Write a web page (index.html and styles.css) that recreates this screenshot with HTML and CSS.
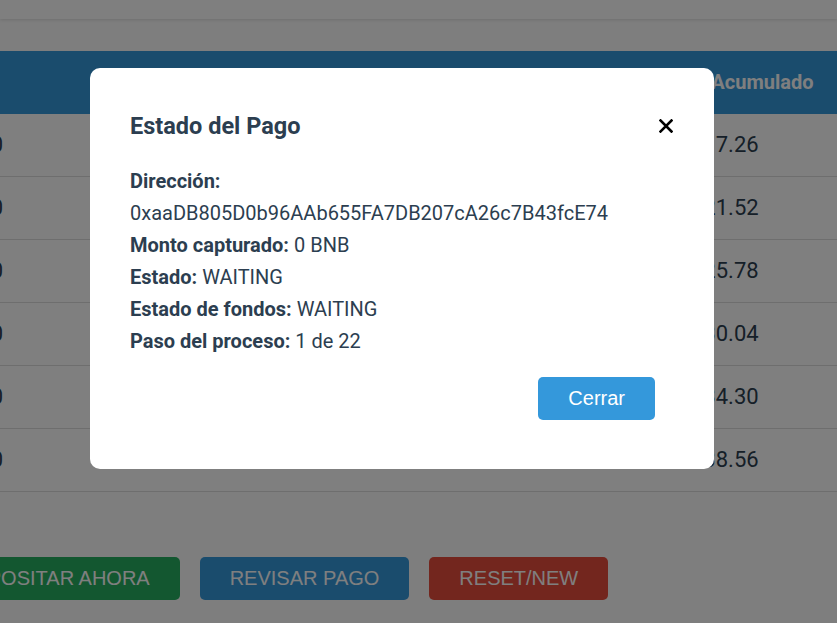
FILE: index.html
```html
<!DOCTYPE html>
<html lang="es">
<head>
<meta charset="utf-8">
<title>Estado del Pago</title>
<link rel="stylesheet" href="styles.css">
</head>
<body>
<div class="topbar"></div>
<main class="page">
  <table class="data">
    <colgroup>
      <col class="c1"><col class="c2"><col class="c3">
    </colgroup>
    <thead>
      <tr><th class="first">Día</th><th></th><th>Monto Acumulado</th></tr>
    </thead>
    <tbody>
      <tr><td class="first">100</td><td></td><td>17.26</td></tr>
      <tr><td class="first">100</td><td></td><td>21.52</td></tr>
      <tr><td class="first">100</td><td></td><td>25.78</td></tr>
      <tr><td class="first">100</td><td></td><td>30.04</td></tr>
      <tr><td class="first">100</td><td></td><td>34.30</td></tr>
      <tr><td class="first">100</td><td></td><td>38.56</td></tr>
    </tbody>
  </table>
  <div class="actions">
    <button class="btn btn-green">DEPOSITAR AHORA</button>
    <button class="btn btn-blue">REVISAR PAGO</button>
    <button class="btn btn-red">RESET/NEW</button>
  </div>
</main>

<div class="overlay">
  <div class="modal">
    <div class="modal-header">
      <h2 class="modal-title">Estado del Pago</h2>
      <button class="close" aria-label="Cerrar">
        <svg width="14" height="14" viewBox="0 0 14 14"><path d="M1.5 1.5 L12.5 12.5 M12.5 1.5 L1.5 12.5" stroke="#000" stroke-width="2.6" stroke-linecap="square" fill="none"/></svg>
      </button>
    </div>
    <div class="modal-body">
      <p><strong>Dirección:</strong> 0xaaDB805D0b96AAb655FA7DB207cA26c7B43fcE74</p>
      <p><strong>Monto capturado:</strong> 0 BNB</p>
      <p><strong>Estado:</strong> WAITING</p>
      <p><strong>Estado de fondos:</strong> WAITING</p>
      <p><strong>Paso del proceso:</strong> 1 de 22</p>
    </div>
    <div class="modal-actions">
      <button class="btn btn-primary">Cerrar</button>
    </div>
  </div>
</div>
</body>
</html>
```
FILE: styles.css
```css
* { box-sizing: border-box; }
html, body { margin: 0; padding: 0; }
body {
  font-family: Roboto, "Liberation Sans", sans-serif;
  color: #2c3e50;
  background: #fcfcfc;
  overflow: hidden;
  height: 623px;
}
.topbar {
  height: 19px;
  background: #ffffff;
  box-shadow: 0 1px 3px rgba(0,0,0,0.12);
}
.page { padding: 0; }

.data {
  margin-top: 32px;
  margin-left: -117px;
  width: 954px;
  table-layout: fixed;
  border-collapse: collapse;
  background: #ffffff;
}
.c1 { width: 120px; }
.c2 { width: 622px; }
.c3 { width: 212px; }
.data th {
  background: #3498db;
  color: #ffffff;
  font-weight: 700;
  font-size: 20px;
  line-height: 22px;
  padding: 20px 15px 21px;
  text-align: center;
  white-space: nowrap;
}
.data th.first { text-align: left; }
.data td {
  font-size: 22px;
  line-height: 22px;
  padding: 20px 15px 20px;
  text-align: center;
  border-bottom: 1px solid #dddddd;
  color: #2c3e50;
}
.data td.first { text-align: right; padding-right: 0; }

.actions {
  display: flex;
  gap: 20px;
  margin-top: 65px;
  margin-left: -70px;
}
.btn {
  font-family: "Liberation Sans", Arial, sans-serif;
  font-size: 20px;
  line-height: 23px;
  padding: 10px 30px;
  border: none;
  border-radius: 5px;
  color: #ffffff;
  white-space: nowrap;
}
.btn-green { background: #27ae60; }
.btn-blue { background: #3498db; }
.btn-red { background: #e74c3c; }
.btn-primary { background: #3498db; }

.overlay {
  position: fixed;
  inset: 0;
  background: rgba(0,0,0,0.5);
}
.modal {
  width: 624px;
  margin: 68px 0 0 90px;
  padding: 40px 40px 40px;
  background: #ffffff;
  border-radius: 10px;
}
.modal-header {
  display: flex;
  justify-content: space-between;
  align-items: center;
  height: 36px;
  margin-bottom: 21px;
}
.modal-title {
  margin: 0;
  font-size: 23.5px;
  font-weight: 700;
  line-height: 36px;
  color: #2c3e50;
}
.close {
  background: none;
  border: none;
  padding: 0;
  margin-right: 1px;
  width: 14px;
  height: 14px;
  display: flex;
}
.modal-body p {
  margin: 0;
  font-size: 20px;
  line-height: 32px;
  color: #2c3e50;
}
.modal-body strong { font-weight: 700; }
.modal-actions {
  display: flex;
  justify-content: flex-end;
  margin-top: 20px;
  padding-right: 19px;
  padding-bottom: 9px;
}
```
